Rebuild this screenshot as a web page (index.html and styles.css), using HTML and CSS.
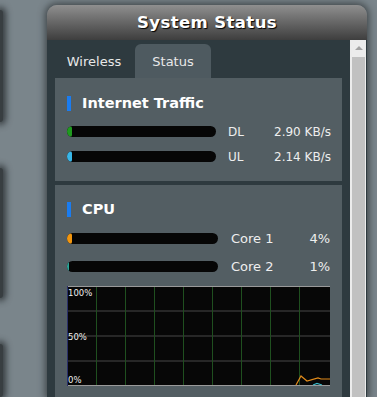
FILE: index.html
```html
<!DOCTYPE html>
<html>
<head>
<meta charset="utf-8">
<link rel="stylesheet" href="styles.css">
</head>
<body>
<div class="side">
  <div class="side-card c1"></div>
  <div class="side-card c2"></div>
  <div class="side-card c3"></div>
</div>
<div class="panel">
  <div class="panel-head">System Status</div>
  <div class="panel-body">
    <div class="main">
      <div class="tabs">
        <div class="tab">Wireless</div>
        <div class="tab active">Status</div>
      </div>
      <div class="content">
        <div class="section traffic">
          <div class="heading"><span class="mark"></span>Internet Traffic</div>
          <div class="row">
            <div class="bar"><div class="fill green"></div></div>
            <span class="label">DL</span>
            <span class="value">2.90 KB/s</span>
          </div>
          <div class="row">
            <div class="bar"><div class="fill cyan"></div></div>
            <span class="label">UL</span>
            <span class="value">2.14 KB/s</span>
          </div>
        </div>
        <div class="divider"></div>
        <div class="section cpu">
          <div class="heading"><span class="mark"></span>CPU</div>
          <div class="row core">
            <div class="bar wide"><div class="fill orange"></div></div>
            <span class="label">Core 1</span>
            <span class="value">4%</span>
          </div>
          <div class="row core">
            <div class="bar wide"><div class="fill teal"></div></div>
            <span class="label">Core 2</span>
            <span class="value">1%</span>
          </div>
          <div class="graph">
            <svg width="263" height="100" viewBox="0 0 263 100">
              <rect x="0" y="0" width="263" height="100" fill="#070707"/>
              <g stroke="#333" stroke-width="1.5">
                <line x1="0" y1="25" x2="263" y2="25"/>
                <line x1="0" y1="50" x2="263" y2="50"/>
                <line x1="0" y1="75" x2="263" y2="75"/>
              </g>
              <g stroke="#1f4f1f" stroke-width="1">
                <line x1="29.5" y1="0" x2="29.5" y2="100"/>
                <line x1="58.5" y1="0" x2="58.5" y2="100"/>
                <line x1="87.5" y1="0" x2="87.5" y2="100"/>
                <line x1="116.5" y1="0" x2="116.5" y2="100"/>
                <line x1="145.5" y1="0" x2="145.5" y2="100"/>
                <line x1="174.5" y1="0" x2="174.5" y2="100"/>
                <line x1="203.5" y1="0" x2="203.5" y2="100"/>
                <line x1="232.5" y1="0" x2="232.5" y2="100"/>
              </g>
              <line x1="0" y1="0.5" x2="263" y2="0.5" stroke="#9a9a9a"/>
              <line x1="0" y1="99.5" x2="263" y2="99.5" stroke="#9a9a9a"/>
              <line x1="0.5" y1="0" x2="0.5" y2="100" stroke="#2a2f6a"/>
              <polyline points="229,99 234,90 240,95 251,92 254,93 263,93" fill="none" stroke="#e08a1a" stroke-width="1.2"/>
              <polyline points="246,99 250,97.5 255,99" fill="none" stroke="#3ab8c8" stroke-width="1.2"/>
              <text x="1" y="10" class="gl">100%</text>
              <text x="1" y="54" class="gl">50%</text>
              <text x="1" y="97" class="gl">0%</text>
            </svg>
          </div>
        </div>
      </div>
    </div>
    <div class="scrollbar">
      <div class="arrow"></div>
      <div class="thumb"></div>
    </div>
  </div>
</div>
</body>
</html>
```
FILE: styles.css
```css
html, body {
  margin: 0;
  padding: 0;
}
body {
  width: 377px;
  height: 397px;
  overflow: hidden;
  background: #7a858b;
  display: flex;
  font-family: "DejaVu Sans", Verdana, sans-serif;
  color: #f0f0f0;
}
.side {
  width: 3px;
  flex: none;
  display: flex;
  flex-direction: column;
  padding-top: 10px;
  gap: 46px;
}
.side-card {
  background: #383e41;
  border-radius: 0 5px 5px 0;
  box-shadow: 0 0 6px 3px rgba(30, 34, 36, 0.75);
}
.c1 { height: 127px; }
.c2 { height: 147px; }
.c3 { height: 60px; }

.panel {
  margin-left: 44px;
  margin-top: 5px;
  width: 320px;
  flex: none;
  display: flex;
  flex-direction: column;
  border-radius: 10px 10px 0 0;
  box-shadow: 0 0 7px 2px rgba(40, 44, 46, 0.7);
  overflow: hidden;
}
.panel-head {
  height: 35px;
  flex: none;
  background: linear-gradient(#8f8f8f, #6a6a6a 45%, #3e3e3e);
  color: #fff;
  font-weight: bold;
  font-size: 16.5px;
  letter-spacing: 0.4px;
  display: flex;
  align-items: center;
  justify-content: center;
  text-shadow: 1px 1px 1px #000;
}
.panel-body {
  flex: 1;
  background: #2e3a3f;
  display: flex;
  padding-left: 8px;
}
.main {
  width: 287px;
  flex: none;
  display: flex;
  flex-direction: column;
}
.tabs {
  height: 38px;
  display: flex;
  align-items: flex-end;
}
.tab {
  width: 78px;
  height: 34px;
  display: flex;
  align-items: center;
  justify-content: center;
  font-size: 13px;
  color: #e8e8e8;
}
.tab.active {
  width: 76px;
  margin-left: 2px;
  background: #4e5a60;
  border-radius: 6px 6px 0 0;
}
.content {
  flex: 1;
  background: #535e63;
}
.section {
  padding-left: 12px;
}
.traffic {
  height: 103px;
  padding-top: 17px;
  box-sizing: border-box;
}
.divider {
  height: 4px;
  background: #2e3a3f;
}
.cpu {
  padding-top: 16px;
}
.heading {
  display: flex;
  align-items: center;
  height: 16px;
  font-weight: bold;
  font-size: 14.5px;
  color: #fff;
}
.mark {
  width: 4px;
  height: 15px;
  background: #1a7cf0;
  margin-right: 11px;
}
.row {
  display: flex;
  align-items: center;
  height: 25px;
  font-size: 12px;
  color: #eee;
  white-space: nowrap;
}
.traffic .heading {
  margin-bottom: 8px;
}
.cpu .heading {
  margin-bottom: 7px;
}
.row.core {
  height: 28px;
  font-size: 13px;
}
.bar {
  width: 149px;
  flex: none;
  height: 11px;
  background: #060606;
  border-radius: 6px;
  display: flex;
  overflow: hidden;
}
.bar.wide {
  width: 151px;
}
.fill {
  width: 5px;
  height: 100%;
  border-radius: 6px;
}
.green { background: #1f9a1f; }
.cyan { background: #38b6e8; }
.orange { background: #f2960f; }
.teal { background: #2aa598; width: 2px; }
.label {
  flex: none;
  margin-left: 12px;
  width: 46px;
}
.core .label {
  margin-left: 13px;
  width: 60px;
}
.value {
  flex: none;
  width: 56px;
  text-align: right;
}
.core .value {
  width: 39px;
}
.graph {
  margin-top: 6px;
  height: 100px;
  display: flex;
}
.gl {
  fill: #eee;
  font-size: 8.5px;
  font-family: "DejaVu Sans", Verdana, sans-serif;
}
.scrollbar {
  margin-left: 8px;
  width: 16px;
  flex: none;
  background: #ececec;
  display: flex;
  flex-direction: column;
  align-items: center;
}
.arrow {
  height: 17px;
  width: 13px;
  position: relative;
}
.arrow::after {
  content: "";
  position: absolute;
  left: 3px;
  top: 6px;
  border-left: 4px solid transparent;
  border-right: 4px solid transparent;
  border-bottom: 4px solid #a3a3a3;
}
.thumb {
  flex: 1;
  width: 13px;
  background: #c1c1c1;
}
```
